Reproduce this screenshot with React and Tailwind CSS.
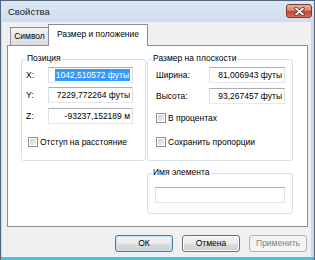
import React from "react";

const TextBox = ({ value, selected, className = "" }) => (
  <div
    className={`h-[16px] flex items-center justify-end pr-[2px] bg-white border border-[#abadb3] border-x-[#dbdfe6] border-b-[#e3e9ef] ${className}`}
  >
    {value && (
      <span
        className={
          selected
            ? "bg-[#3399ff] text-white px-[1px] leading-[12px] whitespace-nowrap"
            : "leading-[12px] whitespace-nowrap"
        }
      >
        {value}
      </span>
    )}
  </div>
);

const CheckBox = ({ label, className = "" }) => (
  <div className={`flex items-center gap-[2px] h-[10px] ${className}`}>
    <div className="w-[10px] h-[10px] border border-[#8e8f8f] bg-white p-[1px]">
      <div className="w-full h-full bg-linear-to-br from-[#cfcfcf] to-[#f7f7f7]" />
    </div>
    <span className="leading-[10px] whitespace-nowrap">{label}</span>
  </div>
);

const GroupBox = ({ title, className = "", children }) => (
  <div className={`relative border border-[#d5dfe5] rounded-[3px] ${className}`}>
    <span className="absolute left-[4px] -top-[7px] bg-white px-[1px] leading-[11px] whitespace-nowrap">
      {title}
    </span>
    {children}
  </div>
);

const Button = ({ children, variant }) => {
  if (variant === "disabled") {
    return (
      <div className="w-[58px] h-[17px] rounded-[3px] border border-[#adb2b5] bg-[#f4f4f4] text-[#838383] flex items-center justify-center">
        {children}
      </div>
    );
  }
  return (
    <div
      className={`w-[58px] h-[17px] rounded-[3px] border bg-[linear-gradient(#f2f2f2,#ebebeb_50%,#dddddd_50%,#cfcfcf)] flex items-center justify-center ${
        variant === "default"
          ? "border-[#3c7fb1] shadow-[inset_0_0_0_1px_#bfe3f7]"
          : "border-[#707070] shadow-[inset_0_0_0_1px_#fbfbfb]"
      }`}
    >
      {children}
    </div>
  );
};

export default function App() {
  return (
    <div className="w-[315px] h-[260px] flex flex-col bg-[#c9d9eb] border-x border-t border-[#52667e] font-['Liberation_Sans',Arial,sans-serif] text-[8.5px] text-black overflow-hidden">
      {/* Title bar */}
      <div className="h-[21px] flex items-start justify-between pl-[7px] pr-[2px] bg-[linear-gradient(#dde8f5,#cddcee)]">
        <span className="text-[9.5px] leading-[21px] text-[#1b1b1b]">Свойства</span>
        <div className="mt-[3px] w-[26px] h-[14px] rounded-[3px] border border-[#7a3a2e] bg-[linear-gradient(#eab0a2,#d98471_45%,#c4442c_52%,#d5705a)] flex items-center justify-center">
          <svg width="11" height="9" viewBox="0 0 11 9">
            <path d="M2 1.5 L9 7.5 M9 1.5 L2 7.5" stroke="#5a2018" strokeWidth="3.2" strokeLinecap="round" />
            <path d="M2 1.5 L9 7.5 M9 1.5 L2 7.5" stroke="#ffffff" strokeWidth="1.7" strokeLinecap="round" />
          </svg>
        </div>
      </div>

      {/* Client area */}
      <div className="ml-[1px] mr-[3px] h-[235px] bg-[#f0f0f0] flex flex-col">
        {/* Tabs */}
        <div className="h-[24px] flex items-end pl-[8px] relative z-10">
          <div className="w-[39px] h-[18px] mb-[1px] border border-b-0 border-[#898c95] bg-linear-to-b from-[#f3f3f3] to-[#dcdcdc] flex items-center justify-center pb-[1px]">
            Символ
          </div>
          <div className="w-[100px] h-[22px] -ml-[1px] border border-b-0 border-[#898c95] bg-white flex items-center justify-center pb-[3px]">
            Размер и положение
          </div>
        </div>

        {/* Tab panel */}
        <div className="-mt-[1px] ml-[5px] w-[301px] h-[182px] border border-[#898c95] bg-white pl-[13px] pt-[13px] flex items-start gap-[1px]">
          <GroupBox title="Позиция" className="w-[125px] h-[102px] pt-[7px] pl-[4px]">
            <div className="flex items-center h-[16px]">
              <span className="w-[22px]">X:</span>
              <TextBox className="w-[85px]" selected value="1042,510572 футы" />
            </div>
            <div className="flex items-center h-[16px] mt-[4px]">
              <span className="w-[22px]">Y:</span>
              <TextBox className="w-[85px]" value="7229,772264 футы" />
            </div>
            <div className="flex items-center h-[16px] mt-[5px]">
              <span className="w-[22px]">Z:</span>
              <TextBox className="w-[85px]" value="-93237,152189 м" />
            </div>
            <CheckBox className="mt-[13px] ml-[2px]" label="Отступ на расстояние" />
          </GroupBox>

          <div className="flex flex-col gap-[12px]">
            <GroupBox title="Размер на плоскости" className="w-[146px] h-[102px] pt-[7px] pl-[8px]">
              <div className="flex items-center h-[16px]">
                <span className="w-[53px]">Ширина:</span>
                <TextBox className="w-[76px]" value="81,006943 футы" />
              </div>
              <div className="flex items-center h-[16px] mt-[5px]">
                <span className="w-[53px]">Высота:</span>
                <TextBox className="w-[76px]" value="93,267457 футы" />
              </div>
              <CheckBox className="mt-[9px]" label="В процентах" />
              <CheckBox className="mt-[14px]" label="Сохранить пропорции" />
            </GroupBox>

            <GroupBox title="Имя элемента" className="w-[146px] h-[41px] pt-[13px] pl-[7px]">
              <TextBox className="w-[130px]" />
            </GroupBox>
          </div>
        </div>

        {/* Buttons */}
        <div className="flex justify-end gap-[9px] mt-[8px] pr-[4px]">
          <Button variant="default">ОК</Button>
          <Button>Отмена</Button>
          <Button variant="disabled">Применить</Button>
        </div>
      </div>

      <div className="h-[3px] bg-[#41c3e8]" />
    </div>
  );
}
